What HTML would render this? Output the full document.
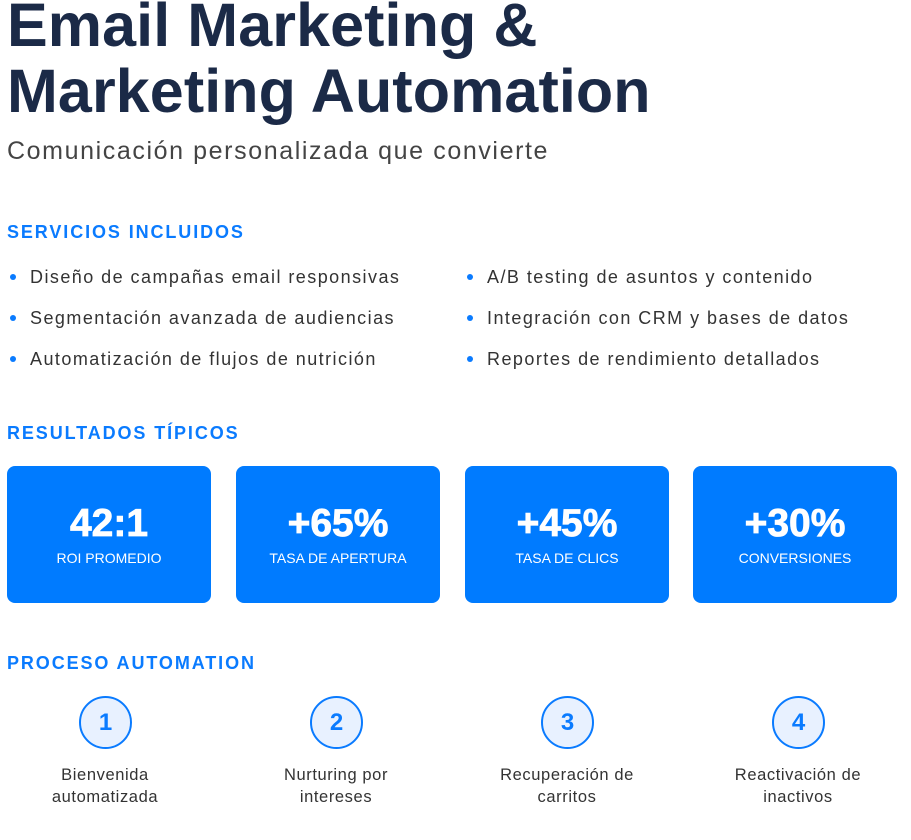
<!DOCTYPE html><html><head><meta charset="utf-8"><style>
*{margin:0;padding:0;box-sizing:border-box}
body{width:911px;height:840px;background:#fff;font-family:"Liberation Sans",sans-serif;position:relative;overflow:hidden;color:#333}
.a{position:absolute;white-space:nowrap}
h1{position:absolute;left:7px;top:-8px;font-size:61px;line-height:66px;font-weight:bold;color:#1b2a47;letter-spacing:0.1px}
.sub{left:7px;top:137px;font-size:25px;color:#444;letter-spacing:1.6px}
.h{font-size:18px;font-weight:bold;color:#0a7bff;letter-spacing:1.9px;left:7px}
.li{font-size:18px;color:#333;letter-spacing:1.45px}
.dot{position:absolute;width:6px;height:6px;border-radius:50%;background:#0a7bff}
.card{position:absolute;top:466px;width:204px;height:137px;background:#007bff;border-radius:8px;color:#fff;text-align:center}
.card b{display:block;margin-top:36px;font-size:39px;line-height:44px;-webkit-text-stroke:0.8px #fff}
.card span{display:block;margin-top:4px;font-size:14px}
.c{position:absolute;top:696px;width:53px;height:53px;border:2px solid #0a7bff;border-radius:50%;background:#e8f1ff;color:#0a7bff;font-weight:bold;font-size:24px;text-align:center;line-height:49px}
.st{position:absolute;top:764px;width:200px;text-align:center;font-size:16.5px;line-height:22px;color:#333;letter-spacing:0.6px}
</style></head><body>
<h1>Email Marketing &amp;<br>Marketing Automation</h1>
<div class="a sub">Comunicación personalizada que convierte</div>
<div class="a h" style="top:222px">SERVICIOS INCLUIDOS</div>
<div class="dot" style="left:10px;top:274px"></div><div class="a li" style="left:30px;top:267px">Diseño de campañas email responsivas</div>
<div class="dot" style="left:10px;top:315px"></div><div class="a li" style="left:30px;top:308px">Segmentación avanzada de audiencias</div>
<div class="dot" style="left:10px;top:356px"></div><div class="a li" style="left:30px;top:349px">Automatización de flujos de nutrición</div>
<div class="dot" style="left:467px;top:274px"></div><div class="a li" style="left:487px;top:267px">A/B testing de asuntos y contenido</div>
<div class="dot" style="left:467px;top:315px"></div><div class="a li" style="left:487px;top:308px">Integración con CRM y bases de datos</div>
<div class="dot" style="left:467px;top:356px"></div><div class="a li" style="left:487px;top:349px">Reportes de rendimiento detallados</div>
<div class="a h" style="top:423px">RESULTADOS TÍPICOS</div>
<div class="card" style="left:7px"><b>42:1</b><span>ROI PROMEDIO</span></div>
<div class="card" style="left:236px"><b>+65%</b><span>TASA DE APERTURA</span></div>
<div class="card" style="left:465px"><b>+45%</b><span>TASA DE CLICS</span></div>
<div class="card" style="left:693px"><b>+30%</b><span>CONVERSIONES</span></div>
<div class="a h" style="top:653px">PROCESO AUTOMATION</div>
<div class="c" style="left:79px">1</div><div class="st" style="left:5px">Bienvenida<br>automatizada</div>
<div class="c" style="left:310px">2</div><div class="st" style="left:236px">Nurturing por<br>intereses</div>
<div class="c" style="left:541px">3</div><div class="st" style="left:467px">Recuperación de<br>carritos</div>
<div class="c" style="left:772px">4</div><div class="st" style="left:698px">Reactivación de<br>inactivos</div>
</body></html>
